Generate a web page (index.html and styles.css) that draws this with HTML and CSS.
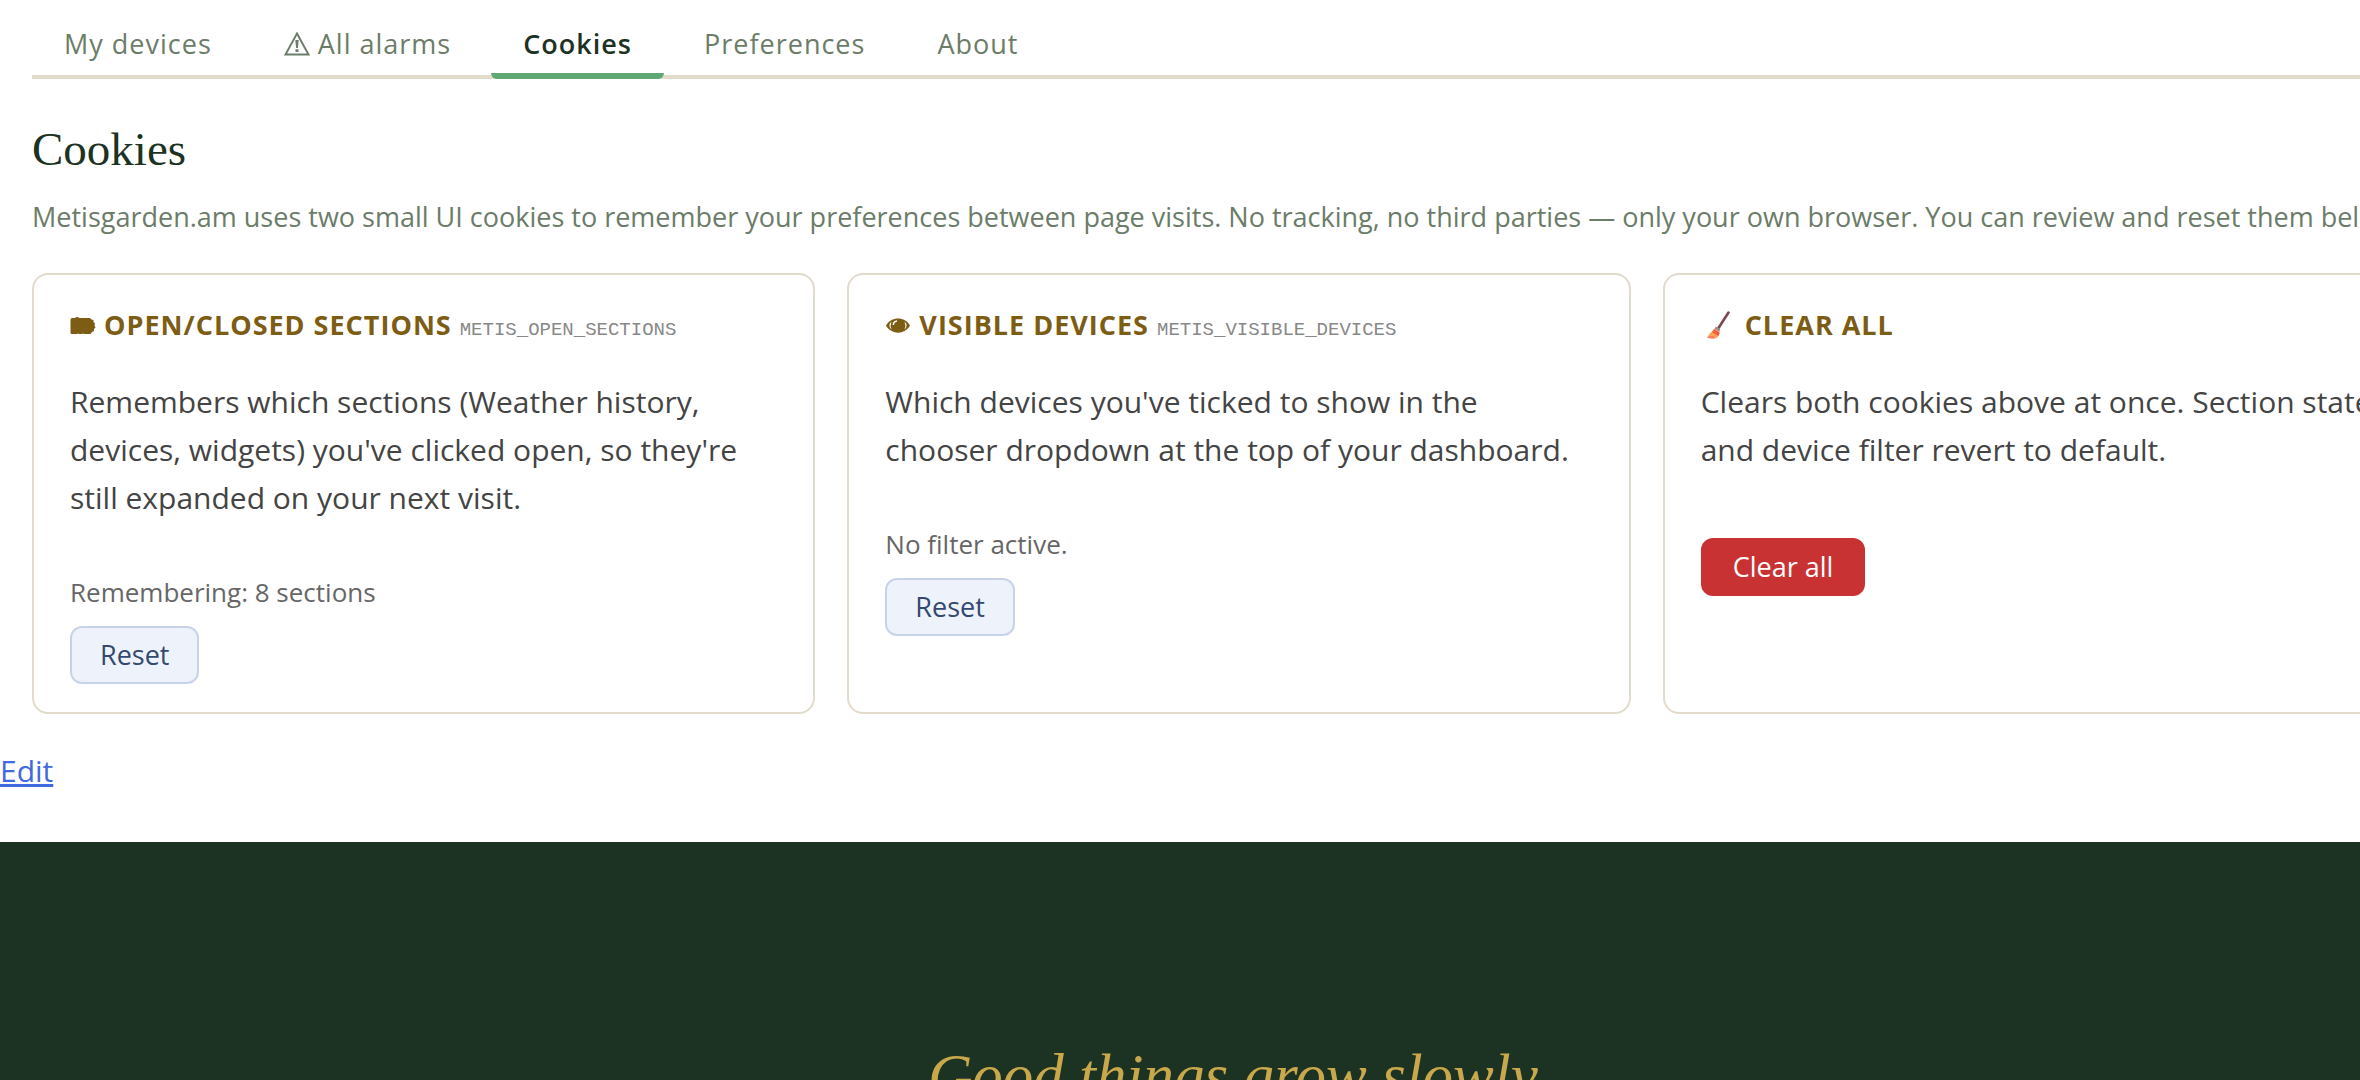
FILE: index.html
```html
<!DOCTYPE html>
<html lang="en">
<head>
    <meta charset="UTF-8">
    <meta name="viewport" content="width=device-width, initial-scale=1.0">
    <title>Cookies - Metisgarden.am</title>
    <link rel="stylesheet" href="styles.css">
</head>
<body>
    <main class="page">
        <nav class="tabs">
            <a href="#devices">My devices</a>
            <a href="#alarms">
                <svg class="warn-icon" viewBox="0 0 26 24" aria-hidden="true">
                    <path d="M13 1.500 L24.500 22.500 H1.500 Z" fill="none" stroke="currentColor" stroke-width="1.900"/>
                    <path d="M11.300 8 h3.400 l-.8 8 h-1.800 Z M11.500 17.300 h3 v2.700 h-3 Z" fill="currentColor"/>
                </svg>
                All alarms
            </a>
            <a href="#cookies" class="active">Cookies</a>
            <a href="#preferences">Preferences</a>
            <a href="#about">About</a>
        </nav>

        <section class="content" id="cookies">
            <h2>Cookies</h2>
            <p class="intro">Metisgarden.am uses two small UI cookies to remember your preferences between page visits. No tracking, no third parties — only your own browser. You can review and reset them below.</p>

            <div class="cards">
                <div class="card">
                    <h3>
                        <svg class="title-icon" viewBox="0 0 26 20" aria-hidden="true">
                            <path d="M.5 5 Q.5 3 2 3 H5 Q7 1 9.500 3 H20 L21.500 4.500 L23.500 5 L23.500 7 L25 8.500 L24.500 10.500 L25.500 12.500 L24 14 L24 16 L22 17 L20.500 19 H2 Q.5 19 .5 17.500 Z" fill="currentColor"/>
                            <path d="M8 18 V19 M13 18 V19" stroke="#fff" stroke-width=".6"/>
                        </svg>
                        Open/closed sections <code>metis_open_sections</code>
                    </h3>
                    <p>Remembers which sections (Weather history, devices, widgets) you've clicked open, so they're still expanded on your next visit.</p>
                    <div class="status">Remembering: 8 sections</div>
                    <button type="button" class="btn">Reset</button>
                </div>

                <div class="card">
                    <h3>
                        <svg class="title-icon" viewBox="0 0 26 20" aria-hidden="true">
                            <path d="M1 10.500 C6 1 20 1 25 10.500 C20 20 6 20 1 10.500 Z" fill="currentColor"/>
                            <path d="M6.500 6.500 Q2.500 10.500 6.500 14.500 Q4.800 10.500 6.500 6.500 Z M19.500 6.500 Q23.500 10.500 19.500 14.500 Q21.200 10.500 19.500 6.500 Z" fill="#fff"/>
                            <path d="M8.300 10 Q8.500 6.500 12 6.100" fill="none" stroke="#fff" stroke-width="1.500"/>
                        </svg>
                        Visible devices <code>metis_visible_devices</code>
                    </h3>
                    <p>Which devices you've ticked to show in the chooser dropdown at the top of your dashboard.</p>
                    <div class="status">No filter active.</div>
                    <button type="button" class="btn">Reset</button>
                </div>

                <div class="card">
                    <h3>
                        <svg class="broom-icon" viewBox="0 0 36 28" aria-hidden="true">
                            <path d="M27.500 1.500 L17.500 17" stroke="#7b4650" stroke-width="2.600" stroke-linecap="round"/>
                            <path d="M14.800 15.600 L19.500 18.500 L18 21 L13.500 18 Z" fill="#a58b93"/>
                            <path d="M13.500 17.500 L18.800 21 Q18.500 24.500 16 27 Q10 28 6 26.500 Q7 25 8.500 23 Q11 20.500 13.500 17.500 Z" fill="#ffa052"/>
                            <path d="M12.500 18.800 L18.300 22.600 M11.500 20.500 L17.700 24.300" stroke="#e8453c" stroke-width="1.300"/>
                            <path d="M6 26.500 Q8 24.500 10.500 25 Q13 25 14.500 27.300 Q9.500 28 6 26.500 Z" fill="#ff7b70"/>
                        </svg>
                        Clear all
                    </h3>
                    <p>Clears both cookies above at once. Section state and device filter revert to default.</p>
                    <button type="button" class="btn btn-danger">Clear all</button>
                </div>
            </div>
        </section>

        <div class="edit"><a href="#edit">Edit</a></div>

        <footer>
            <p>Good things grow slowly.</p>
        </footer>
    </main>
</body>
</html>
```

FILE: styles.css
```css
html {
    overflow: hidden;
}

body {
    margin: 0;
    background: white;
    color: #444;
    font-family: "Segoe UI", "Open Sans", sans-serif;
    font-size: 30px;
    line-height: 48px;
}

/* a little wider than the window, the last card runs off the right side */
.page {
    width: 105vw;
}

.tabs {
    display: flex;
    gap: 8px;
    margin: 0 32px;
    padding-top: 16px;
    border-bottom: 4px solid #e2dcca;
}

.tabs a {
    margin-bottom: -4px;
    padding: 4px 32px 5px;
    border-bottom: 6px solid transparent;
    border-radius: 6px;
    color: #6b7c68;
    font-size: 27px;
    letter-spacing: 1px;
    text-decoration: none;
    white-space: nowrap;
}

.tabs a.active {
    border-bottom-color: #5fa876;
    color: #1c3222;
    font-weight: 600;
}

.warn-icon {
    width: 26px;
    height: 24px;
    vertical-align: -2px;
}

.content {
    padding: 0 32px;
}

h2 {
    margin: 0;
    padding-top: 42px;
    color: #1c3222;
    font-family: Georgia, "Liberation Serif", serif;
    font-size: 47px;
    font-weight: normal;
    line-height: 56px;
}

.intro {
    margin: 16px 0 32px;
    color: #6b7c68;
    font-size: 27px;
}

.cards {
    display: grid;
    grid-template-columns: repeat(3, 1fr);
    gap: 32px;
}

.card {
    display: flex;
    flex-direction: column;
    align-items: flex-start;
    padding: 26px 36px 28px;
    border: 2px solid #e2dacb;
    border-radius: 16px;
}

.card h3 {
    margin: 0 0 29px;
    color: #7d5c14;
    font-size: 27px;
    letter-spacing: 1px;
    text-transform: uppercase;
}

.card code {
    color: #888;
    font-family: Consolas, "Liberation Mono", monospace;
    font-size: 19px;
    font-weight: normal;
    letter-spacing: 0;
    line-height: 1;
}

.title-icon {
    width: 26px;
    height: 20px;
}

.broom-icon {
    width: 36px;
    height: 28px;
    vertical-align: -4px;
}

.card p {
    margin: 0 0 50px;
}

.status {
    color: #666;
    font-size: 26px;
    line-height: 40px;
}

.btn {
    margin: 14px 0 0;
    padding: 8px 28px;
    border: 2px solid #c8d3ea;
    border-radius: 12px;
    background: #eef3fb;
    color: #34496f;
    font-family: inherit;
    font-size: 27px;
    line-height: 38px;
}

.btn-danger {
    padding: 8px 30px;
    border-color: #c93232;
    background: #c93232;
    color: white;
}

.edit {
    padding: 33px 0 47px;
}

.edit a {
    color: #4169e1;
}

footer {
    padding: 198px 32px;
    background: #1c3222;
    text-align: center;
}

footer p {
    margin: 0;
    color: #c9a84c;
    font-family: Georgia, "Liberation Serif", serif;
    font-size: 61px;
    font-style: italic;
    line-height: 72px;
}
```
